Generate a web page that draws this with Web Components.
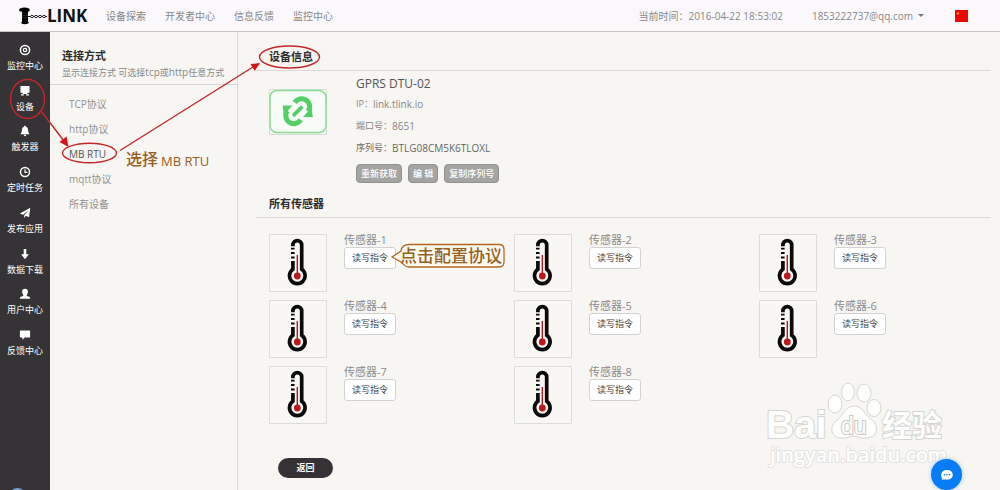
<!DOCTYPE html>
<html lang="zh-CN">
<head>
<meta charset="utf-8">
<title>TLINK 设备信息</title>
<style>
html, body { margin: 0; min-height: 100%; }
body {
  background: #f7f6f2; color: #888;
  font: 10px/16px "Open Sans", "Noto Sans CJK SC", sans-serif;
  position: relative; overflow: hidden;
}
</style>
</head>
<body>
<tlink-app></tlink-app>
<script>
function define(name, html, setup) {
  const tpl = document.createElement('template');
  tpl.innerHTML = html;
  customElements.define(name, class extends HTMLElement {
    constructor() {
      super();
      this.attachShadow({ mode: 'open' }).append(tpl.content.cloneNode(true));
    }
    connectedCallback() { if (setup) setup(this, this.shadowRoot); }
  });
}

const icons = {
  monitor: '<circle cx="6" cy="6" r="4.6" fill="none" stroke="#fff" stroke-width="1.5"/><circle cx="6" cy="6" r="1.7" fill="none" stroke="#fff" stroke-width="1.2"/>',
  device: '<path fill="#fff" d="M1.500 1h9v6.800h-9zM3.600 7.600h4.800v1.400H3.600zM2 9.200h2.800v1.400H2zM7.200 9.200h2.800v1.400H7.200z"/>',
  bell: '<path fill="#fff" d="M6 .7c.7 0 1 .4 1 1 1.600.5 2 1.900 2.100 3.600.1 2 .7 3 1.500 3.900H1.400c.8-.9 1.400-1.900 1.500-3.900C3 3.600 3.400 2.200 5 1.700c0-.6.3-1 1-1zM4.800 9.800h2.400c0 .8-.5 1.400-1.200 1.400s-1.200-.6-1.200-1.400z"/>',
  clock: '<circle cx="6" cy="6" r="4.500" fill="none" stroke="#fff" stroke-width="1.500"/><path fill="none" stroke="#fff" stroke-width="1.200" d="M6 3.200V6.300H8.300"/>',
  plane: '<path fill="#fff" d="M11.300.8 10 10.200 6.900 8.800 5.200 11V8.200L9.700 3 4.200 7.700.9 6.500z"/>',
  down: '<path fill="#fff" d="M4.700 1h2.600v5.300h2.600L6 11.200 2.100 6.300h2.600z"/>',
  user: '<path fill="#fff" d="M6 .8c1.900 0 2.900 1.300 2.900 3 0 1.300-.5 2.400-1.200 3.100v.8l2.800 1.300c.5.200.6.700.6 1.800H.9c0-1.100.1-1.600.6-1.800l2.800-1.300v-.8C3.600 6.200 3.100 5.100 3.100 3.800c0-1.700 1-3 2.900-3z"/>',
  chat: '<path fill="#fff" d="M1.600 1.500h8.800q.7 0 .7.700v5.600q0 .7-.7.700H5.800L3.400 10.800V8.500H1.600q-.7 0-.7-.7V2.200q0-.7.7-.7z"/>'
};

define('top-bar', `
<style>
:host { display: flex; align-items: center; height: 31px; padding: 0 32px 0 18px; background: #faf8fb; border-bottom: 1px solid #c9c7c6; }
.logo { display: flex; align-items: center; color: #111; font-size: 17px; font-weight: 700; text-decoration: none; width: 88px; }
nav { display: flex; gap: 19px; }
a { color: #888; text-decoration: none; white-space: nowrap; }
.right { margin-left: auto; display: flex; align-items: center; }
time { white-space: nowrap; }
button { all: unset; display: flex; align-items: center; gap: 5px; margin: 0 31px 0 29px; }
i { border: 3px solid transparent; border-top-color: #777; border-bottom: 0; }
svg { display: block; }
</style>
<a class="logo" href="#"><svg width="29" height="18" viewBox="0 0 29 18"><path d="M2 1.500Q6.500-.5 11 1.500Q12.500 3 11 4.500H10V14.500L11 16Q6.500 18.500 3 16L4 14.500V4.500H2Q.3 3 2 1.500z"/><path d="M4 6.500h6M4 8.500h6M4 10.500h6" stroke="#555" stroke-width=".4"/><path d="M9 9.500h20" stroke="#111" stroke-width="1"/><g fill="#faf8fb" stroke="#111" stroke-width=".9"><ellipse cx="14" cy="9.500" rx="1.500" ry="1.100"/><ellipse cx="18" cy="9.500" rx="1.500" ry="1.100"/><ellipse cx="22" cy="9.500" rx="1.500" ry="1.100"/><ellipse cx="26" cy="9.500" rx="1.500" ry="1.100"/></g></svg>LINK</a>
<nav><a href="#">设备探索</a><a href="#">开发者中心</a><a href="#">信息反馈</a><a href="#">监控中心</a></nav>
<div class="right"><time>当前时间：2016-04-22 18:53:02</time><button>1853222737@qq.com<i></i></button>
<svg width="13" height="12" viewBox="0 0 13 12"><path fill="#ed0808" d="M0 0h13v12H0z"/><path fill="#ffd000" d="m3 2 .5 1h1l-.8.700.3 1-1-.600-1 .600.300-1-.8-.700h1z"/></svg></div>`);

define('side-item', `
<style>
:host { display: block; }
a { display: flex; flex-direction: column; align-items: center; gap: 3px; color: #fff; font-size: 9px; line-height: 13px; text-decoration: none; }
svg { display: block; }
</style>
<a href="#"><svg width="12" height="12" viewBox="0 0 12 12"></svg><slot></slot></a>`,
(el, root) => { root.querySelector('svg').innerHTML = icons[el.getAttribute('icon')]; });

define('side-nav', `
<style>
:host { display: block; background: #353335; padding-top: 12px; }
nav { display: flex; flex-direction: column; justify-content: space-between; min-height: 313px; }
</style>
<nav>
<side-item icon="monitor">监控中心</side-item><side-item icon="device">设备</side-item>
<side-item icon="bell">触发器</side-item><side-item icon="clock">定时任务</side-item>
<side-item icon="plane">发布应用</side-item><side-item icon="down">数据下载</side-item>
<side-item icon="user">用户中心</side-item><side-item icon="chat">反馈中心</side-item>
</nav>`);

define('link-panel', `
<style>
:host { display: block; border-right: 1px solid #dbd9db; }
header { padding: 16px 0 3px 12px; border-bottom: 1px solid #d6d4d6; }
h2 { margin: 0; font-size: 11px; line-height: 16px; color: #2c2c2c; }
p { margin: 0; font-size: 9px; line-height: 16px; white-space: nowrap; }
p span { font-size: 10px; }
ul { list-style: none; margin: 0; padding: 7px 0 0 19px; }
a { display: block; line-height: 25px; color: #929292; text-decoration: none; }
a.on { color: #555; }
</style>
<header><h2>连接方式</h2><p>显示连接方式 可选择<span>tcp</span>或<span>http</span>任意方式</p></header>
<ul><li><a href="#">TCP协议</a></li><li><a href="#">http协议</a></li><li><a href="#" class="on">MB RTU</a></li><li><a href="#">mqtt协议</a></li><li><a href="#">所有设备</a></li></ul>`);

define('section-title', `
<style>
:host { display: block; border-bottom: 1px solid #d9d8d6; padding: 0 0 5px 13px; }
h2 { margin: 0; font-size: 11px; line-height: 16px; color: #2c2c2c; }
</style><h2><slot></slot></h2>`);

define('device-info', `
<style>
:host { display: flex; gap: 29px; padding: 3px 0 0 13px; }
svg { display: block; margin-top: 15px; flex: none; }
h3 { margin: 0; font-size: 12px; font-weight: 400; line-height: 19px; color: #555; }
dl { margin: 0; }
dl div { display: flex; line-height: 22px; }
dt { font-size: 9px; } dd { margin: 0; }
.dark { color: #666; }
.row { display: flex; gap: 6px; margin-top: 5px; }
button { box-sizing: border-box; height: 19px; padding: 0 4px; border: 1px solid #919191; border-radius: 4px; background: #a4a4a3; color: #fff; font: 500 9px/17px "Open Sans", "Noto Sans CJK SC", sans-serif; white-space: nowrap; }
</style>
<svg width="58" height="46" viewBox="0 0 58 46"><path d="M.5.5h57v45H.5z" fill="none" stroke="#d4dfd4"/><rect x="1" y="1.500" width="56" height="42" rx="7" fill="#f9fbf7" stroke="#8bdc97" stroke-width="1.500"/>
<g><path d="M25.800 13.600A8 8 0 1 1 39 22.600" fill="none" stroke="#54cf68" stroke-width="5"/><path d="M34 28 42.500 18.500 43.800 28z" fill="#54cf68"/></g>
<g transform="rotate(180 28.700 22.200)"><path d="M25.800 13.600A8 8 0 1 1 39 22.600" fill="none" stroke="#54cf68" stroke-width="5"/><path d="M34 28 42.500 18.500 43.800 28z" fill="#54cf68"/></g>
<path d="M25.200 25.700l7-7" stroke="#f9fbf7" stroke-width="6" stroke-linecap="round"/><path d="M25.200 25.700l7-7" stroke="#54cf68" stroke-width="3.800" stroke-linecap="round"/></svg>
<div><h3>GPRS DTU-02</h3>
<dl><div><dt>IP：</dt><dd>link.tlink.io</dd></div><div><dt>端口号：</dt><dd>8651</dd></div><div class="dark"><dt>序列号：</dt><dd>BTLG08CM5K6TLOXL</dd></div></dl>
<div class="row"><button>重新获取</button><button>编 辑</button><button>复制序列号</button></div></div>`);

define('sensor-card', `
<style>
:host { display: flex; gap: 17px; align-items: flex-start; }
svg { display: block; flex: none; }
h4 { margin: 0 0 1px; font-size: 11px; font-weight: 400; line-height: 12px; color: #8c8c8c; }
button { box-sizing: border-box; display: block; height: 22px; padding: 0 7px; border: 1px solid #d2d2d2; border-radius: 3px; background: #fff; color: #444; font: 9px/20px "Open Sans", "Noto Sans CJK SC", sans-serif; white-space: nowrap; }
</style>
<svg width="58" height="58" viewBox="0 0 58 58"><path d="M.5.5h57v57H.5z" fill="#f8f7f4" stroke="#dcdcda"/>
<path d="M23.900 12.300V11a4.400 4.400 0 0 1 8.800 0V35.300A7.800 7.800 0 1 1 23.900 35.300V27" fill="none" stroke="#0a0a0a" stroke-width="3.700"/>
<path d="M22 13.700h3.600v1.900H22zM22 18h3.600v2H22zM22 22.500h3.600v2H22z" fill="#0a0a0a"/>
<path d="M28.300 21v20" stroke="#b9191e" stroke-width="1.400"/><circle cx="28.300" cy="42" r="3.400" fill="#b9191e"/></svg>
<div><h4><slot></slot></h4><button>读写指令</button></div>`);

define('device-page', `
<style>
:host { display: block; padding: 17px 9px 0 18px; }
.second { margin-top: 13px; }
.grid { display: grid; grid-template-columns: repeat(3, 1fr); row-gap: 8px; padding: 16px 0 0 13px; margin-right: -13px; }
.back { display: block; box-sizing: border-box; width: 55px; height: 20px; margin: 34px 0 12px 22px; padding: 0; border: 0; border-radius: 10px; background: #343234; color: #fff; font: 700 9px/20px "Open Sans", "Noto Sans CJK SC", sans-serif; }
</style>
<section-title>设备信息</section-title>
<device-info></device-info>
<section-title class="second">所有传感器</section-title>
<div class="grid">
<sensor-card>传感器-1</sensor-card><sensor-card>传感器-2</sensor-card><sensor-card>传感器-3</sensor-card>
<sensor-card>传感器-4</sensor-card><sensor-card>传感器-5</sensor-card><sensor-card>传感器-6</sensor-card>
<sensor-card>传感器-7</sensor-card><sensor-card>传感器-8</sensor-card>
</div>
<button class="back">返回</button>`);

define('guide-marks', `
<style>
:host { position: absolute; left: 0; top: 0; pointer-events: none; }
svg { display: block; }
text { font-family: "Open Sans", "Noto Sans CJK SC", sans-serif; fill: #96601c; }
.narrow { font-family: "Liberation Sans Narrow", "Open Sans", sans-serif; }
</style>
<svg width="520" height="280" viewBox="0 0 520 280">
<g fill="none" stroke="#c4262b" stroke-width="1.400"><ellipse cx="27.500" cy="99" rx="17" ry="19.500"/><ellipse cx="89.500" cy="153" rx="27" ry="9.800"/><ellipse cx="289.500" cy="57" rx="30" ry="11"/><path d="M41 111 64 141M120 150.500 253 67"/></g>
<path fill="#d3151a" d="M68.500 147 59.500 142 66.500 136.500zM260 63 254.700 71 250.500 64z"/>
<text x="126" y="165" font-size="16" font-weight="500">选择</text><text class="narrow" x="161" y="166" font-size="13">MB RTU</text>
<path d="M392 257 401 251Q402 244.500 409 244.500H499Q504 244.500 504 249.500V262Q504 267 499 267H409Q405 267 402 262.500z" fill="#fbf8f0" stroke="#b2691f" stroke-width="1.300"/>
<text x="400" y="262" font-size="17" font-weight="500">点击配置协议</text>
</svg>`);

define('site-mark', `
<style>
:host { position: absolute; right: 50px; top: 378px; pointer-events: none; }
svg { display: block; overflow: visible; }
text { font-family: "Liberation Sans", "Noto Sans CJK SC", sans-serif; fill: #fefefd; stroke: #d6d5d2; stroke-width: 2; paint-order: stroke; }
.url { font-family: "Open Sans", sans-serif; stroke: #e4e3e0; }
</style>
<svg width="185" height="92" viewBox="0 0 185 92">
<g transform="translate(-15 0)" fill="#fefefd" stroke="#d6d5d2"><ellipse cx="85" cy="26" rx="7" ry="9"/><ellipse cx="98" cy="14" rx="6.500" ry="9"/><ellipse cx="114" cy="15" rx="7" ry="9"/><ellipse cx="124" cy="30" rx="7" ry="8.500"/><path d="M104 28C113 28 115 37 122 42C130 49 127 60 116 60C111 61 107 58 104 58C100 58 96 61 91 60C81 60 79 49 86 43C93 38 95 28 104 28z"/></g>
<text x="1" y="60" font-size="39" font-weight="700">Bai</text>
<text x="76" y="56" font-size="23" style="stroke:#c9c8c5">du</text>
<text x="117" y="58" font-size="30" font-weight="700">经验</text>
<text class="url" x="5" y="84" font-size="20" font-weight="600">jingyan.baidu.com</text>
</svg>`);

define('chat-bubble', `
<style>
:host { position: absolute; right: 38px; top: 459px; }
button { display: grid; place-items: center; width: 31px; height: 31px; padding: 0; border: 0; border-radius: 50%; background: #087cf5; box-shadow: 0 0 4px #9cc4ec; }
</style>
<button aria-label="chat"><svg width="14" height="12" viewBox="0 0 14 12"><path fill="#fff" d="M7 1C10.500 1 12.800 3.100 12.800 5.800S10.500 10.600 7 10.600H1.600Q2.300 9.800 1.800 8.700Q1.200 7.600 1.200 5.800C1.200 3.100 3.500 1 7 1z"/><g fill="#087cf5"><circle cx="4.500" cy="5.800" r=".8"/><circle cx="7" cy="5.800" r=".8"/><circle cx="9.500" cy="5.800" r=".8"/></g></svg></button>`);

define('tlink-app', `
<style>
:host { display: block; }
.cols { display: grid; grid-template-columns: 50px 188px minmax(0, 1fr); min-height: calc(100vh - 32px); }
.orb { position: absolute; left: 9px; top: 488px; width: 17px; height: 17px; border-radius: 50%; background: #7d9fc4; }
</style>
<top-bar></top-bar>
<div class="cols"><side-nav></side-nav><link-panel></link-panel><device-page></device-page></div>
<div class="orb"></div>
<site-mark></site-mark><chat-bubble></chat-bubble><guide-marks></guide-marks>`);
</script>
</body>
</html>
